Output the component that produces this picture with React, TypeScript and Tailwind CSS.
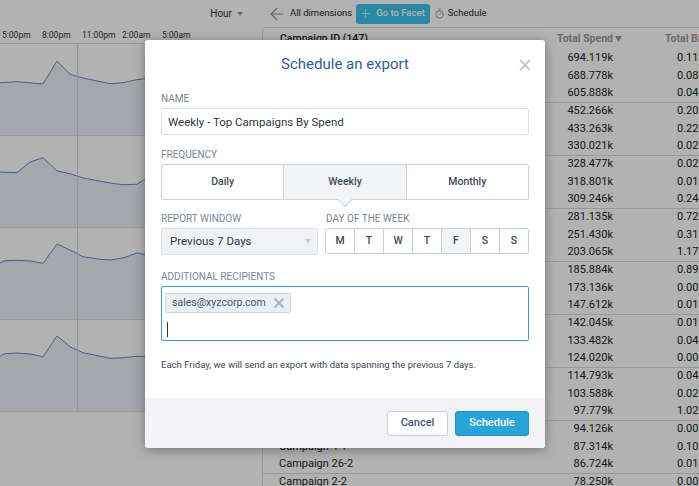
import React from 'react';
import { ArrowLeft, Plus, Timer, X } from 'lucide-react';

const spend = [
  '694.119k', '688.778k', '605.888k', '452.266k', '433.263k', '330.021k', '328.477k', '318.801k', '309.246k',
  '281.135k', '251.430k', '203.065k', '185.884k', '173.136k', '147.612k', '142.045k', '133.482k', '124.020k',
  '114.793k', '103.588k', '97.779k', '94.126k', '87.314k', '86.724k', '78.250k',
];
const bids = [
  '0.118', '0.080', '0.045', '0.202', '0.224', '0.027', '0.028', '0.010', '0.241', '0.722', '0.311', '1.173',
  '0.899', '0.001', '0.016', '0.019', '0.043', '0.004', '0.046', '0.021', '1.022', '0.007', '0.102', '0.017', '0.001',
];
const names = [
  'Campaign 12-1', 'Campaign 3-2', 'Campaign 18-1', 'Campaign 7-3', 'Campaign 1-1', 'Campaign 22-2', 'Campaign 9-1',
  'Campaign 14-2', 'Campaign 5-3', 'Campaign 30-1', 'Campaign 11-2', 'Campaign 6-1', 'Campaign 19-3', 'Campaign 8-2',
  'Campaign 25-1', 'Campaign 16-2', 'Campaign 2-1', 'Campaign 21-3', 'Campaign 13-1', 'Campaign 10-2', 'Campaign 27-1',
  'Campaign 15-3', 'Campaign 4-1', 'Campaign 26-2', 'Campaign 2-2',
];

const rows = spend.map((s, i) => ({ name: names[i], spend: s, bid: bids[i] }));
const groups: (typeof rows)[] = [];
for (let i = 0; i < rows.length; i += 3) groups.push(rows.slice(i, i + 3));

const charts: [number, number][][] = [
  [[0, 38.7], [17, 37.7], [43, 40], [57, 17], [70, 30.3], [83, 34], [110, 39.7], [123, 38.7], [137, 35.7], [150, 34], [170, 36], [200, 40], [230, 38], [262, 40]],
  [[0, 36], [17, 36.7], [30, 26], [43, 21.7], [57, 35], [70, 37.7], [83, 42], [110, 47], [123, 48.7], [137, 48.3], [145, 43], [170, 45], [200, 50], [230, 47], [262, 49]],
  [[0, 35], [5, 32.7], [17, 32.3], [30, 33], [43, 35.3], [57, 16], [70, 22], [83, 28.7], [100, 31.3], [110, 32], [123, 30], [137, 25], [145, 26.7], [170, 28], [200, 31], [230, 29], [262, 30]],
  [[0, 36], [5, 33.7], [17, 33], [30, 34], [43, 36.7], [57, 16], [70, 26.7], [83, 32.7], [110, 38.3], [123, 37.7], [137, 36.3], [145, 36.7], [170, 37], [200, 39], [230, 37], [262, 38]],
];

const times = ['5:00pm', '8:00pm', '11:00pm', '2:00am', '5:00am'];
const days = ['M', 'T', 'W', 'T', 'F', 'S', 'S'];

const Sparkline = ({ points }: { points: [number, number][] }) => {
  const line = points.map(([x, y], i) => `${i ? 'L' : 'M'}${x} ${y}`).join(' ');
  return (
    <svg width="262" height="91" viewBox="0 0 262 91" className="block">
      <path d={`${line} L262 91 L0 91 Z`} fill="#eef0f8" />
      <path d={line} fill="none" stroke="#7088b8" strokeWidth="1" />
      <line x1="77.5" y1="0" x2="77.5" y2="91" stroke="#d4d4d4" />
    </svg>
  );
};

const Label = ({ children }: { children: React.ReactNode }) => (
  <div className="text-[10px] leading-[13px] mb-[3px] uppercase text-[#7a8495]">{children}</div>
);

const App: React.FC = () => {
  return (
    <div className="relative w-[699px] h-[486px] overflow-hidden bg-white [font-family:Roboto,sans-serif] text-[#222]">
      <div className="flex h-full">
        {/* chart panel */}
        <div className="w-[262px] shrink-0">
          <div className="h-[27px] flex items-center justify-end pr-[19px] text-[10px] text-[#333]">
            <span>Hour</span>
            <svg width="6" height="4" viewBox="0 0 6 4" className="ml-[5px]">
              <path d="M0 0h6L3 4z" fill="#999" />
            </svg>
          </div>
          <div className="h-[16px] flex items-center text-[8.5px] text-[#333]">
            {times.map((t) => (
              <span key={t} className="w-[40px] shrink-0 pl-[2px]">{t}</span>
            ))}
          </div>
          <div className="border-t border-[#dcdcdc]">
            {charts.map((c, i) => (
              <div key={i} className="h-[92px] border-b border-[#dcdcdc]">
                <Sparkline points={c} />
              </div>
            ))}
          </div>
        </div>

        {/* table */}
        <div className="flex-1 min-w-0">
          <div className="h-[27px] flex items-center pl-[8px] text-[9.5px] text-[#222] whitespace-nowrap">
            <ArrowLeft size={20} strokeWidth={1.3} className="text-[#8a8a8a] -mx-[3px]" />
            <span className="ml-[6px]">All dimensions</span>
            <button className="ml-[4px] h-[20px] pl-[3px] pr-[5px] rounded-[3px] bg-[#3cc4ec] text-white font-medium flex items-center gap-[4px]">
              <Plus size={13} strokeWidth={2.2} className="text-white/60" />
              Go to Facet
            </button>
            <Timer size={11} strokeWidth={1.6} className="ml-[4px] text-[#777]" />
            <span className="ml-[3px]">Schedule</span>
          </div>
          <div className="border-l border-t border-[#dcdcdc] rounded-tl-[4px]">
            <div className="h-[22px] flex items-center text-[10.5px] whitespace-nowrap">
              <div className="w-[297px] shrink-0 pl-[17px] font-medium text-[#222]">Campaign ID (147)</div>
              <div className="w-[62px] shrink-0 flex justify-end items-center font-bold text-[#9a9a9a]">
                Total Spend
                <svg width="7" height="6" viewBox="0 0 7 6" className="ml-[2px] shrink-0">
                  <path d="M0 0h7L3.5 6z" fill="#9a9a9a" />
                </svg>
              </div>
              <div className="pl-[43px] font-bold text-[#9a9a9a]">Total Bid Amount</div>
            </div>
            {groups.map((g, gi) => (
              <div key={gi} className="border-b border-[#dcdcdc]">
                {g.map((r) => (
                  <div key={r.name} className="h-[17.33px] flex items-center text-[11px] text-[#222] whitespace-nowrap">
                    <div className="w-[297px] shrink-0 pl-[16px]">{r.name}</div>
                    <div className="w-[62px] shrink-0 text-right pr-[9px]">{r.spend}</div>
                    <div className="pl-[55px]">{r.bid}</div>
                  </div>
                ))}
              </div>
            ))}
          </div>
        </div>
      </div>

      {/* modal */}
      <div className="absolute inset-0 bg-black/30 flex justify-center items-start pt-[40px] pr-[9px]">
        <div className="w-[400px] bg-white rounded-[3px] shadow-[0_2px_12px_rgba(0,0,0,0.35)] overflow-hidden">
          <div className="relative h-[48px] flex items-center justify-center">
            <h2 className="text-[15px] text-[#2d5ea6]">Schedule an export</h2>
            <button className="absolute right-[11px] top-[16px] text-[#c5c9ce]">
              <X size={18} strokeWidth={2.5} />
            </button>
          </div>

          <div className="px-4 pt-[4px] pb-[26px]">
            <Label>Name</Label>
            <input
              readOnly
              value="Weekly - Top Campaigns By Spend"
              className="w-full h-[27px] border border-[#d9dee4] rounded-[2px] pl-[6px] text-[11.5px] text-[#2d3440] outline-none"
            />

            <div className="mt-[13px]">
              <Label>Frequency</Label>
              <div className="flex h-[36px] border border-[#cbd4dd] rounded-[2px] text-[10.5px] font-medium text-[#3f4a5a]">
                <div className="flex-1 flex items-center justify-center">Daily</div>
                <div className="relative flex-1 flex items-center justify-center bg-[#f2f4f6] border-x border-[#cbd4dd]">
                  Weekly
                  <div className="absolute -bottom-[6px] left-1/2 -ml-[5px] w-[10px] h-[10px] rotate-45 bg-[#f2f4f6] border-r border-b border-[#cbd4dd]" />
                </div>
                <div className="flex-1 flex items-center justify-center">Monthly</div>
              </div>
            </div>

            <div className="mt-[12px] flex gap-[7px]">
              <div className="w-[157px] shrink-0">
                <Label>Report Window</Label>
                <div className="h-[27px] flex items-center justify-between bg-[#f1f2f4] border border-[#dfe2e6] rounded-[2px] pl-[8px] pr-[6px] text-[11.5px] text-[#2d3440]">
                  Previous 7 Days
                  <svg width="6" height="5" viewBox="0 0 6 5">
                    <path d="M0 0h6L3 5z" fill="#c5cbd3" />
                  </svg>
                </div>
              </div>
              <div className="flex-1">
                <Label>
                  <span className="pl-[1px]">Day of the week</span>
                </Label>
                <div className="flex h-[26px] border border-[#c8d0d8] rounded-[2px] text-[10.5px] font-medium text-[#3e4858]">
                  {days.map((d, i) => (
                    <div
                      key={i}
                      className={`flex-1 flex items-center justify-center ${i > 0 ? 'border-l border-[#c8d0d8]' : ''} ${i === 4 ? 'bg-[#f1f3f5]' : ''}`}
                    >
                      {d}
                    </div>
                  ))}
                </div>
              </div>
            </div>

            <div className="mt-[15px]">
              <Label>Additional Recipients</Label>
              <div className="h-[55px] border border-[#29a6d6] rounded-[2px] pl-[3px] pt-[2px]">
                <span className="inline-flex items-center h-[20px] pl-[6px] pr-[7px] bg-[#ebeef3] border border-[#d0d8e1] rounded-[2px] text-[10.5px] text-[#4b5566]">
                  sales@xyzcorp.com
                  <X size={16} strokeWidth={3} className="ml-[5px] -mr-[4px] text-[#a8b5c5]" />
                </span>
                <div className="mt-[9px] ml-[2px] w-[1px] h-[15px] bg-[#333]" />
              </div>
            </div>

            <p className="mt-[17px] text-[9.5px] leading-[14px] text-[#3e4756]">
              Each Friday, we will send an export with data spanning the previous 7 days.
            </p>
          </div>

          <div className="h-[50px] bg-[#f3f3f5] flex items-center justify-end gap-[7px] px-4">
            <button className="h-[25px] w-[61px] bg-white border border-[#c8d1da] rounded-[3px] text-[11px] font-medium text-[#4a5568]">
              Cancel
            </button>
            <button className="h-[25px] w-[74px] bg-[#27a4d8] border border-[#1f93c4] rounded-[3px] text-[11px] font-medium text-white">
              Schedule
            </button>
          </div>
        </div>
      </div>
    </div>
  );
};

export default App;
